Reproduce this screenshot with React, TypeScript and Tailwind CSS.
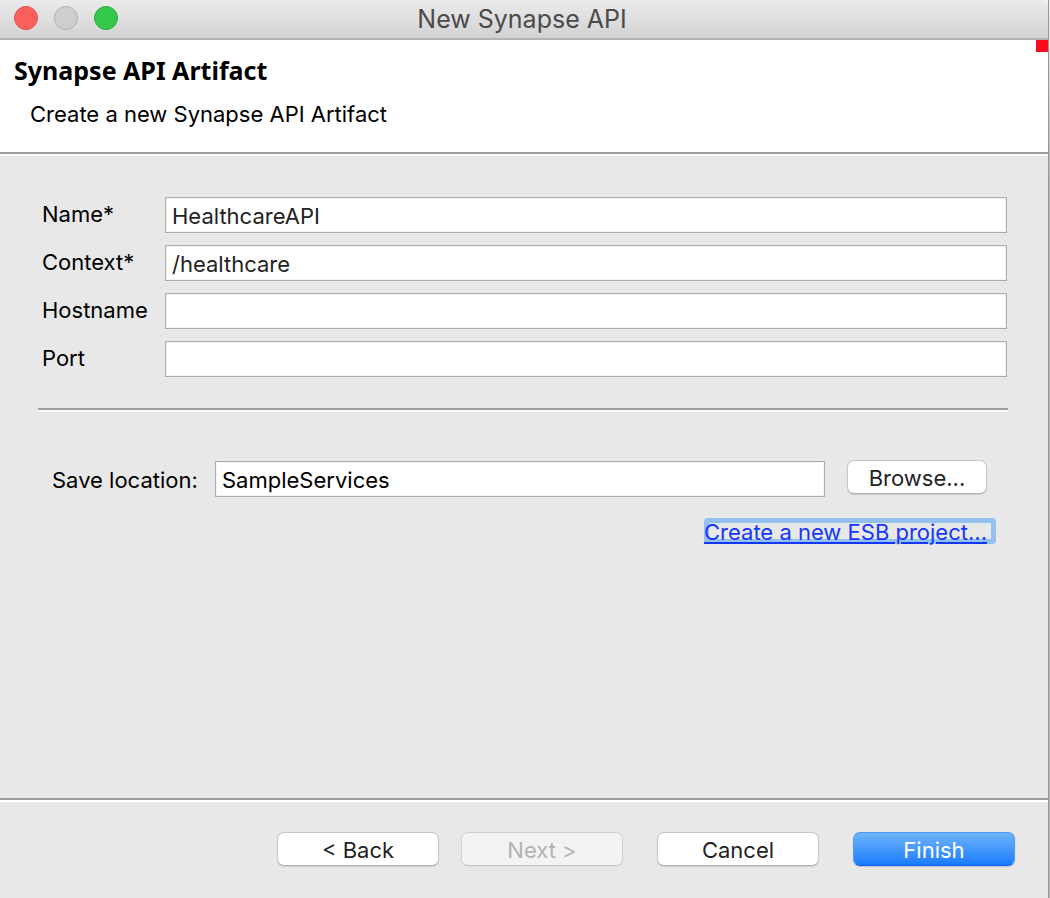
import { useState } from 'react';
import type { ReactNode } from 'react';

const inputClass =
  'h-9 min-w-0 flex-1 border border-[#acacac] bg-white px-1.5 pt-0.5 text-[22px] leading-8 shadow-[inset_0_0_0_1px_#f3f3f3] outline-none';

const buttonBase =
  'flex h-[34px] items-center justify-center rounded-[7px] border pt-0.5 text-[22px] leading-8';

const plainButton =
  'border-[#c6c6c6] border-b-[#b0b0b0] bg-white text-[#232323] shadow-[0_1px_1px_rgba(0,0,0,0.12)]';

const disabledButton =
  'border-[#d2d2d2] border-b-[#c6c6c6] bg-[#f3f3f3] text-[#b2b2b2] shadow-[0_1px_1px_rgba(0,0,0,0.04)]';

const primaryButton =
  'border-[#4d9cf2] border-b-[#0f63f0] bg-linear-to-b from-[#6db3f8] to-[#147bfe] text-white shadow-[0_1px_1px_rgba(0,0,0,0.16)]';

function Divider() {
  return <div role="separator" className="h-1 shrink-0 border-t-2 border-[#9c9c9c] bg-white" />;
}

function Field({ id, label, initial }: { id: string; label: string; initial: string }) {
  const [value, setValue] = useState(initial);
  return (
    <div className="flex items-start">
      <label htmlFor={id} className="w-[123px] shrink-0 text-[22px] leading-[34px]">
        {label}
      </label>
      <input
        id={id}
        type="text"
        value={value}
        onChange={(e) => setValue(e.target.value)}
        className={`${inputClass} text-[#232323]`}
      />
    </div>
  );
}

function WizardButton({ tone, disabled, children }: { tone: string; disabled?: boolean; children: ReactNode }) {
  return (
    <button type="button" disabled={disabled} className={`${buttonBase} w-[162px] ${tone}`}>
      {children}
    </button>
  );
}

export default function App() {
  const [location, setLocation] = useState('SampleServices');
  return (
    <div className="flex min-h-screen bg-[#f2f2f2] font-['Inter',sans-serif] text-black">
      <main className="flex min-w-0 flex-1 flex-col overflow-hidden rounded-tr-[6px] bg-[#e8e8e8]">
        <header className="grid h-10 shrink-0 grid-cols-[1fr_auto_1fr] items-start border-b-2 border-[#b2b2b2] bg-linear-to-b from-[#ebebeb] to-[#d2d2d2] pt-1.5 pr-[18px] pl-3.5">
          <div className="flex gap-4">
            <button type="button" aria-label="Close" className="size-6 rounded-full border border-[#e2514d] bg-[#fc605c]" />
            <button type="button" aria-label="Minimize" className="size-6 rounded-full border border-[#b0b0b0] bg-[#cecece]" />
            <button type="button" aria-label="Zoom" className="size-6 rounded-full border border-[#29ac3c] bg-[#34c84a]" />
          </div>
          <h1 className="text-[25px] leading-[26px] text-[#4b4b4b]">New Synapse API</h1>
        </header>

        <section className="flex h-28 shrink-0 items-start justify-between bg-white">
          <div className="pt-3.5 pl-3.5">
            <h2 className="font-['Noto_Sans',sans-serif] text-[25px] leading-8 font-bold">Synapse API Artifact</h2>
            <p className="mt-3.5 pl-4 text-[22px] leading-7">Create a new Synapse API Artifact</p>
          </div>
          <span className="size-3 bg-[#fc0d1b]" />
        </section>
        <Divider />

        <form className="flex flex-1 flex-col pt-[41px] pr-10 pl-[38px]" onSubmit={(e) => e.preventDefault()}>
          <div className="flex flex-col gap-3 pr-px pl-1">
            <Field id="name" label="Name*" initial="HealthcareAPI" />
            <Field id="context" label="Context*" initial="/healthcare" />
            <Field id="hostname" label="Hostname" initial="" />
            <Field id="port" label="Port" initial="" />
          </div>
          <div className="mt-[31px]">
            <Divider />
          </div>
          <div className="mt-12 flex items-start pr-[21px] pl-3.5">
            <label htmlFor="location" className="w-[163px] shrink-0 text-[22px] leading-10">
              Save location:
            </label>
            <input
              id="location"
              type="text"
              value={location}
              onChange={(e) => setLocation(e.target.value)}
              className={`mt-px ${inputClass}`}
            />
            <button type="button" className={`ml-[22px] w-[140px] ${buttonBase} ${plainButton}`}>
              Browse...
            </button>
          </div>
          <div className="mt-[18px] flex justify-end pr-3">
            <a
              href="#new-project"
              className="h-[26px] w-[292px] rounded-[4px] text-[22px] leading-7 whitespace-nowrap text-[#1336fb] underline decoration-2 underline-offset-2 shadow-[inset_0_0_0_5px_#94c0f0]"
            >
              Create a new ESB project...
            </a>
          </div>
        </form>

        <Divider />
        <footer className="flex h-24 shrink-0 justify-end pt-[30px] pr-[33px]">
          <div className="flex items-start gap-[34px]">
            <div className="flex gap-[22px]">
              <WizardButton tone={plainButton}>&lt; Back</WizardButton>
              <WizardButton tone={disabledButton} disabled>
                Next &gt;
              </WizardButton>
            </div>
            <WizardButton tone={plainButton}>Cancel</WizardButton>
            <WizardButton tone={primaryButton}>Finish</WizardButton>
          </div>
        </footer>
      </main>
      <div className="w-0.5 shrink-0 border-l border-[#989898] bg-linear-to-b from-[#f2f2f2] via-[#b8b8b8] via-20% to-[#b4b4b4]" />
    </div>
  );
}
